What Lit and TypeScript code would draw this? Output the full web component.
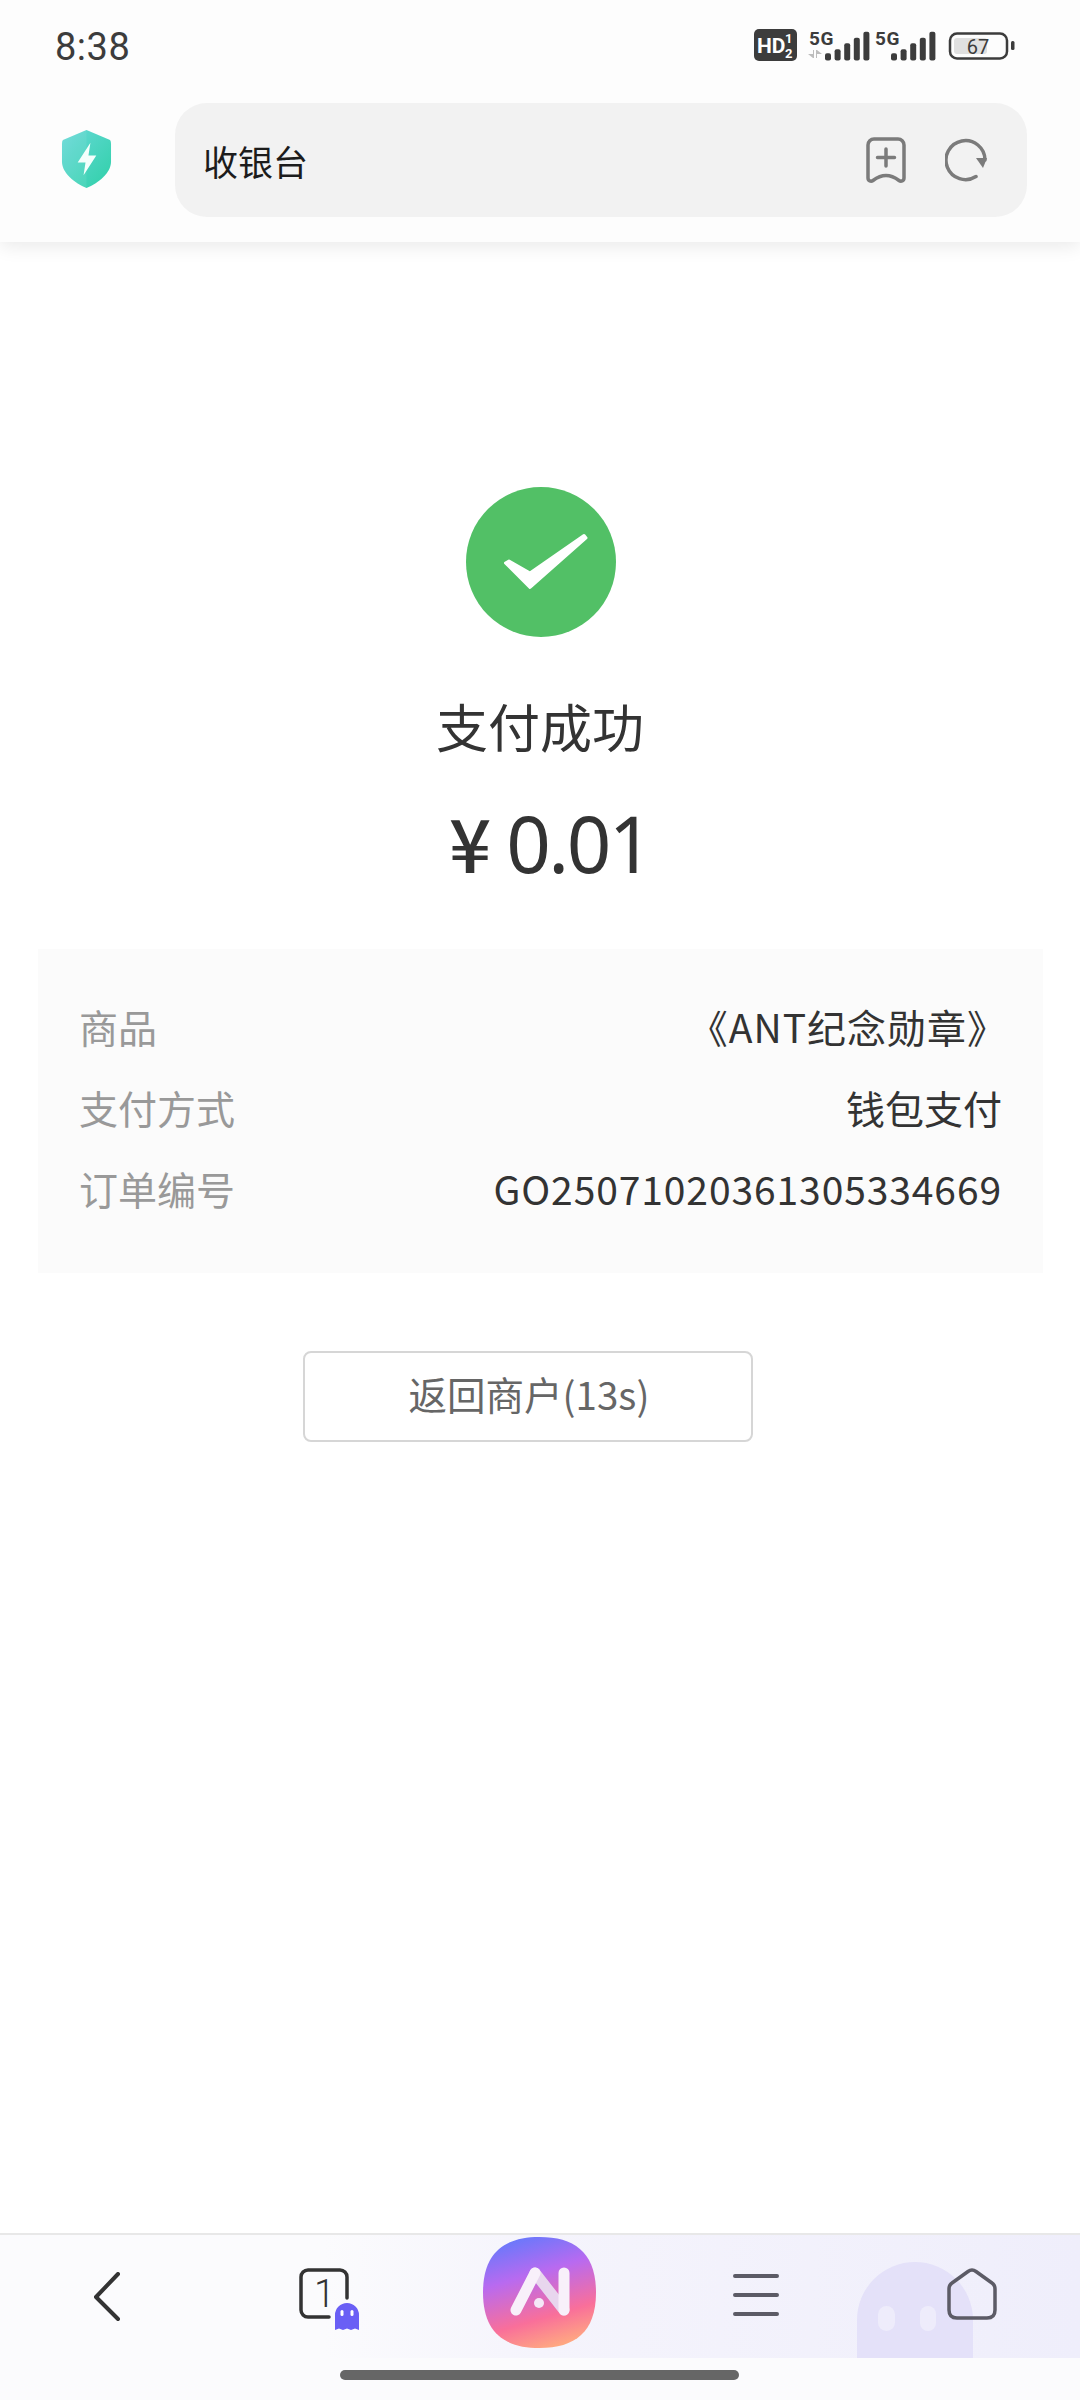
import { LitElement, html, css, svg } from "lit";
import { customElement } from "lit/decorators.js";

@customElement("app-root")
export class AppRoot extends LitElement {
  static styles = css`
    :host { display: block; width: 1080px; height: 2400px; background: #fff; font-family: "Noto Sans CJK SC", "Noto Sans", sans-serif; }
    .page { height: 2400px; display: flex; flex-direction: column; }
    .top { height: 242px; background: #fdfdfd; box-shadow: 0 4px 18px rgba(0,0,0,.09); display: flex; flex-direction: column; position: relative; z-index: 1; flex: none; }
    .status { height: 103px; display: flex; justify-content: space-between; padding: 27px 60px 0 55px; box-sizing: border-box; }
    .time { font-family: Roboto, sans-serif; font-size: 38px; line-height: 40px; color: #3c3c3c; letter-spacing: .5px; }
    .status svg { margin-top: -1px; display: block; }
    .bar { display: flex; align-items: flex-start; padding-left: 61px; }
    .shield { width: 51px; height: 59px; margin-top: 27px; flex: none; }
    .url { margin-left: 63px; width: 852px; height: 114px; border-radius: 32px; background: #f2f2f2; display: flex; align-items: center; padding: 0 40px 0 28px; box-sizing: border-box; }
    .url span { flex: 1; font-size: 35px; color: #1c1c1c; }
    .url svg { display: block; }
    .book { margin-right: 39px; }
    main { flex: 1; display: flex; flex-direction: column; align-items: center; padding-top: 245px; }
    .check { display: block; width: 150px; height: 150px; margin-left: 2px; }
    h1 { margin: 54px 0 0; font-size: 52px; line-height: 70px; font-weight: 400; color: #333; }
    .amount { margin: 35px 0 0 20px; font-family: "Noto Sans", sans-serif; font-size: 78px; line-height: 90px; color: #333; display: flex; align-items: baseline; gap: 15px; letter-spacing: -2.5px; }
    .amount b { font-weight: 500; font-size: 74px; font-family: "Noto Sans CJK SC", sans-serif; letter-spacing: 0; }
    .panel { margin: 61px 0 0 38px; width: 1005px; height: 324px; background: #fbfbfb; padding: 36px 41px 0; box-sizing: border-box; display: flex; flex-direction: column; align-self: flex-start; }
    .row { height: 81px; display: flex; justify-content: space-between; align-items: center; font-size: 39px; color: #333; }
    .row span:first-child { color: #999; }
    .wide { letter-spacing: 1px; margin-right: -5px; }
    .num { letter-spacing: .9px; }
    .btn { margin: 78px 0 0 303px; width: 450px; height: 91px; box-sizing: border-box; border: 2px solid #d6d6d6; border-radius: 8px; display: flex; align-items: center; justify-content: center; font-size: 38.5px; color: #666; align-self: flex-start; padding: 0 0 8px 2px; }
    nav { height: 167px; flex: none; background: #fbfbfd; border-top: 2px solid #e8e8e8; box-sizing: border-box; position: relative; }
    .tint { height: 123px; background: linear-gradient(90deg, rgba(240,238,252,0) 30%, #f5f4fc 50%, #efeefb 100%); display: flex; align-items: flex-start; position: relative; overflow: hidden; }
    .ghost { position: absolute; left: 857px; top: 27px; width: 116px; height: 98px; }
    .ic { position: relative; flex: none; display: block; }
    .back { margin: 37px 0 0 93px; }
    .tabs { margin: 33px 0 0 178px; }
    .logo { margin: 2px 0 0 124px; }
    .menu { margin: 38px 0 0 137px; }
    .home { margin: 33px 0 0 168px; }
    .pill { position: absolute; left: 340px; top: 135px; width: 399px; height: 10px; border-radius: 5px; background: #666; }
  `;

  statusIcons() {
    const ys = [53.3, 49.3, 43.3, 37.7, 31.7];
    const bars = (x: number) => ys.map((y, i) =>
      svg`<rect x=${x + i * 9.6} y=${y} width="6" height=${60.5 - y} rx="2" fill="#3c3c3c" />`);
    return html`<svg width="270" height="40" viewBox="750 26 270 40">
      <rect x="754" y="29" width="43" height="32" rx="5" fill="#3c3c3c" />
      <text x="757" y="53" font-family="Roboto, sans-serif" font-weight="700" font-size="21" fill="#fff">HD</text>
      <text x="785" y="43" font-family="Roboto, sans-serif" font-weight="700" font-size="13" fill="#fff">1</text>
      <text x="785" y="58" font-family="Roboto, sans-serif" font-weight="700" font-size="13" fill="#fff">2</text>
      <text x="809" y="45" font-family="Roboto, sans-serif" font-weight="700" font-size="19" letter-spacing=".5" fill="#3c3c3c">5G</text>
      <path d="M808 54h5v-4h1v8h-1zM816 50h1l5 4h-5v4h-1z" fill="#bdbdbd" />
      ${bars(825)}
      <text x="875" y="45" font-family="Roboto, sans-serif" font-weight="700" font-size="19" letter-spacing=".5" fill="#3c3c3c">5G</text>
      ${bars(891)}
      <rect x="950" y="33.500" width="57" height="25" rx="7" fill="none" stroke="#3c3c3c" stroke-width="2.500" />
      <rect x="954" y="38" width="33" height="16" rx="3" fill="#e0e0e0" />
      <text x="978" y="53.500" text-anchor="middle" font-family="Roboto, sans-serif" font-size="20" fill="#3c3c3c">67</text>
      <rect x="1011" y="41" width="3.500" height="9" rx="1.500" fill="#3c3c3c" />
    </svg>`;
  }

  render() {
    return html`<div class="page">
      <div class="top">
        <div class="status"><div class="time">8:38</div>${this.statusIcons()}</div>
        <div class="bar">
          <svg class="shield" viewBox="0 0 52 60">
            <defs><linearGradient id="sg" x1="0" y1="0" x2="1" y2="1"><stop offset="0" stop-color="#68d9d8" /><stop offset="1" stop-color="#2fd0a8" /></linearGradient></defs>
            <path d="M26 0 L50 10 Q51 11 51 14 V32 C51 44 38 54 26 59 C14 54 1 44 1 32 V14 Q1 11 2 10 Z" fill="url(#sg)" />
            <path d="M26 0 L2 10 Q1 11 1 14 V32 C1 44 14 54 26 59Z" fill="#fff" fill-opacity=".07" />
            <path d="M30 13 L17 33 H25 L23 46 L36 26 H28 Z" fill="#f4fffc" />
          </svg>
          <div class="url">
            <span>收银台</span>
            <svg class="book" width="40" height="46" viewBox="0 0 40 46" fill="none" stroke="#7b7b7b" stroke-width="3.500" stroke-linecap="round" stroke-linejoin="round">
              <path d="M2 8a6 6 0 0 1 6-6h24a6 6 0 0 1 6 6v33c0 3-3 4-5 2.500-4-3-8-5-13-5s-9 2-13 5c-2 1.500-5 .5-5-2.500z" />
              <path d="M20 12v17M11.500 20.500h17" />
            </svg>
            <svg width="42" height="44" viewBox="0 0 42 44" fill="none">
              <path d="M40 22A19.500 19.500 0 1 0 31 38.500" stroke="#7b7b7b" stroke-width="3.500" stroke-linecap="round" />
              <path d="M31 20 L42 20 L38 30 Z" fill="#7b7b7b" />
            </svg>
          </div>
        </div>
      </div>
      <main>
        <svg class="check" viewBox="0 0 150 150">
          <circle cx="75" cy="75" r="75" fill="#52c066" />
          <path d="M39.500 76 L64 100.500 L120 51 L118 48.500 L64 86 L43 74 Z" fill="#fff" stroke="#fff" stroke-width="3" stroke-linejoin="round" />
        </svg>
        <h1>支付成功</h1>
        <div class="amount"><b>¥</b><span>0.01</span></div>
        <div class="panel">
          <div class="row"><span>商品</span><span class="wide">《ANT纪念勋章》</span></div>
          <div class="row"><span>支付方式</span><span>钱包支付</span></div>
          <div class="row"><span>订单编号</span><span class="num">GO25071020361305334669</span></div>
        </div>
        <div class="btn">返回商户(13s)</div>
      </main>
      <nav>
        <div class="tint">
          <svg class="ghost" viewBox="0 0 116 98">
            <path d="M0 98V58a58 58 0 0 1 116 0v40z" fill="#e4e1f9" />
            <rect x="21" y="44" width="17" height="25" rx="8.500" fill="#eeecfb" />
            <rect x="63" y="44" width="16" height="25" rx="8" fill="#eeecfb" />
          </svg>
          <svg class="ic back" width="28" height="50" viewBox="0 0 28 50" fill="none" stroke="#333" stroke-width="4" stroke-linecap="round" stroke-linejoin="round"><path d="M25 2 L3 25 L25 47" /></svg>
          <svg class="ic tabs" width="60" height="64" viewBox="0 0 60 64">
            <path d="M48 30V9a7 7 0 0 0-7-7H9a7 7 0 0 0-7 7v33a7 7 0 0 0 7 7h21" fill="none" stroke="#333" stroke-width="3.500" stroke-linecap="round" />
            <text x="15" y="39" font-family="Roboto, sans-serif" font-weight="300" font-size="38" fill="#333">1</text>
            <path d="M36 62V47a12 12 0 0 1 24 0v15l-4-1.500-4 1.500-4-1.500-4 1.500-4-1.500z" fill="#6a5ff5" />
            <rect x="41.500" y="42" width="3" height="6" rx="1.500" fill="#fff" /><rect x="51.500" y="42" width="3" height="6" rx="1.500" fill="#fff" />
          </svg>
          <svg class="ic logo" width="113" height="111" viewBox="0 0 113 111">
            <defs><linearGradient id="lg" x1=".35" y1="0" x2=".65" y2="1"><stop offset="0" stop-color="#6a78fb" /><stop offset=".33" stop-color="#b86af0" /><stop offset=".72" stop-color="#f96f9a" /><stop offset="1" stop-color="#ffab80" /></linearGradient></defs>
            <path d="M56.500 0C92 0 113 16 113 55.500S92 111 56.500 111 0 95 0 55.500 21 0 56.500 0Z" fill="url(#lg)" />
            <g fill="none" stroke-width="11" stroke-linecap="round">
              <path d="M52 36 L81 73" stroke="#e8d6ee" />
              <path d="M33 73 L52 36 M81 36 V73" stroke="#f8f0fa" />
            </g>
            <circle cx="56" cy="66" r="5" fill="#f4e8f7" />
          </svg>
          <svg class="ic menu" width="46" height="46" viewBox="0 0 46 46" stroke="#5c5b66" stroke-width="4" stroke-linecap="round"><path d="M2 3H44M2 22H44M2 41H44" /></svg>
          <svg class="ic home" width="50" height="52" viewBox="0 0 50 52" fill="none" stroke="#5c5b66" stroke-width="3.500" stroke-linejoin="round"><path d="M25 2 Q27 2 29 3.500 L45 15 Q48 17 48 21 V42 Q48 50 40 50 H10 Q2 50 2 42 V21 Q2 17 5 15 L21 3.500 Q23 2 25 2Z" /></svg>
        </div>
        <div class="pill"></div>
      </nav>
    </div>`;
  }
}
